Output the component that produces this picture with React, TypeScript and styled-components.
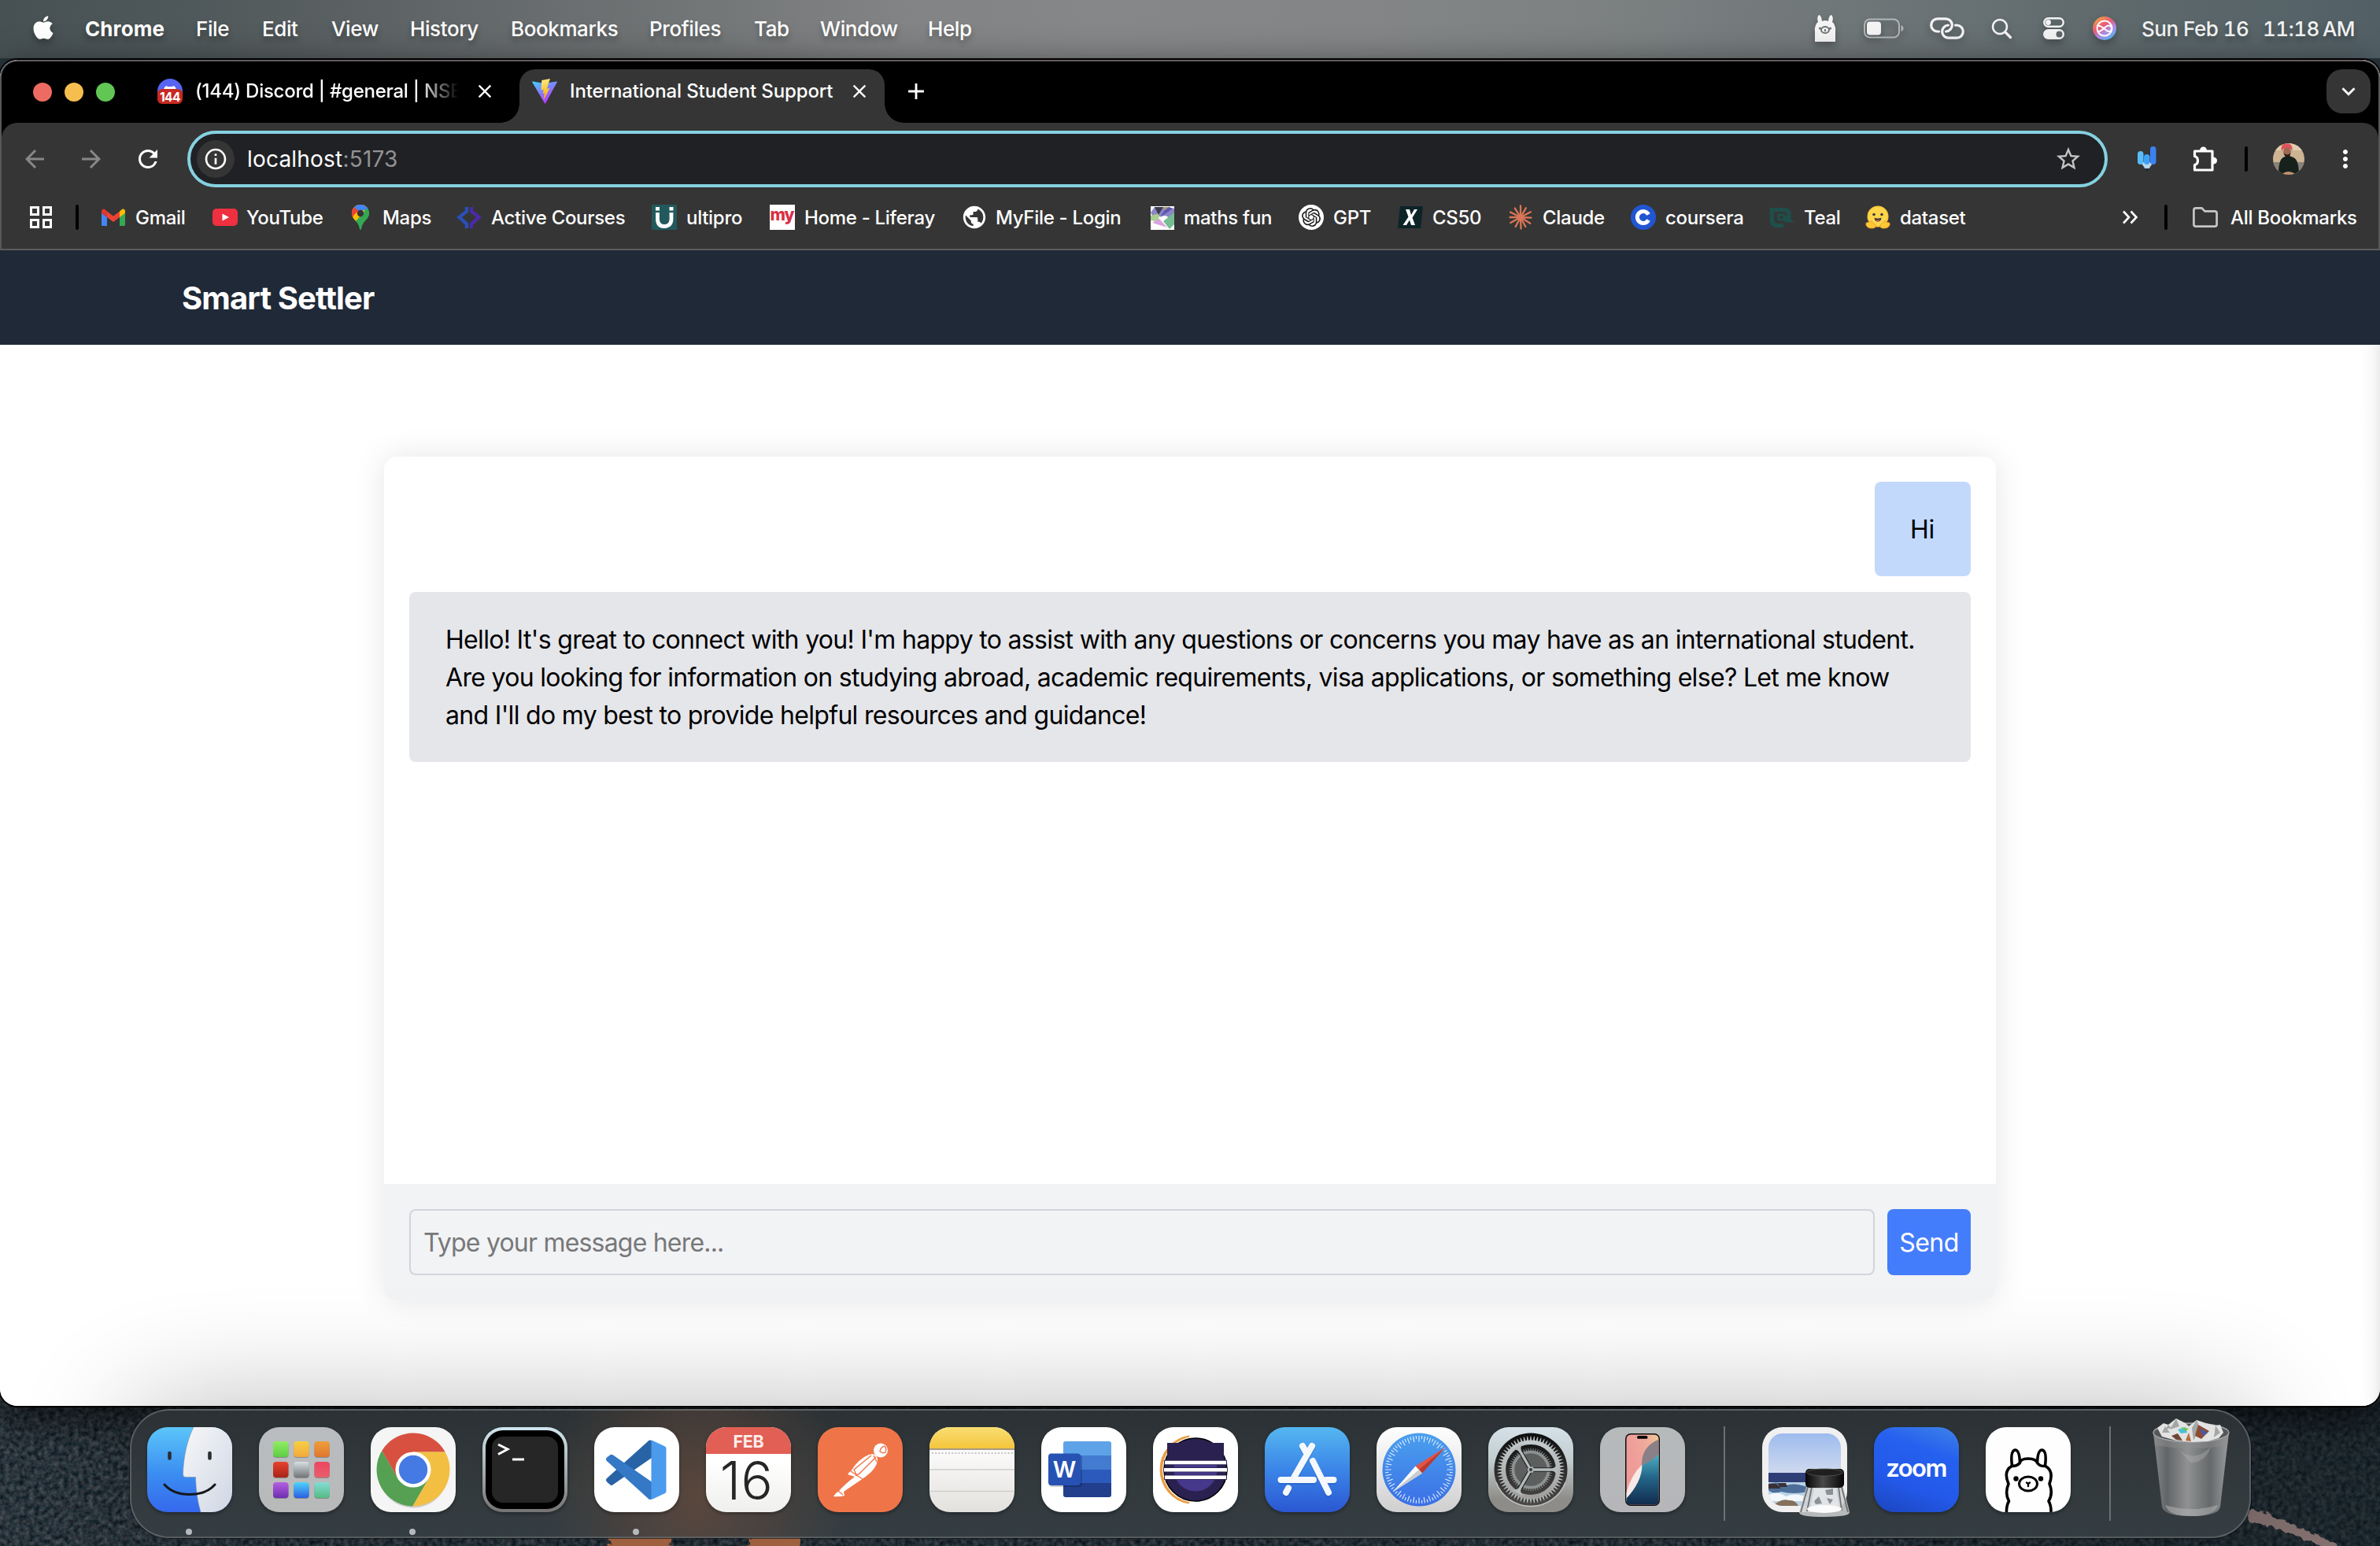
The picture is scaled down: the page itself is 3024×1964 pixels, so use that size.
import React from "react";
import styled, { createGlobalStyle } from "styled-components";
import { FaApple } from "react-icons/fa";
import { SiOpenai } from "react-icons/si";
import {
  MdArrowBack,
  MdArrowForward,
  MdRefresh,
  MdStarBorder,
  MdClose,
  MdAdd,
  MdKeyboardArrowDown,
  MdInfoOutline,
  MdMoreVert,
  MdPublic,
} from "react-icons/md";

const GlobalStyle = createGlobalStyle`
  * { box-sizing: border-box; }
  html, body { margin: 0; padding: 0; }
  body {
    width: 3024px;
    height: 1964px;
    overflow: hidden;
    background: #1d262b;
    font-family: Inter, "Liberation Sans", sans-serif;
    -webkit-font-smoothing: antialiased;
  }
  svg { display: block; flex: none; }
`;

/* ---------- desktop ---------- */

const Desktop = styled.div`
  position: relative;
  display: flex;
  flex-direction: column;
  width: 3024px;
  height: 1964px;
  overflow: hidden;
  background: #29353c;
`;

const Wallpaper = styled.svg`
  position: absolute;
  left: 0;
  bottom: 0;
`;

/* ---------- menu bar ---------- */

const MenuBar = styled.header`
  position: relative;
  display: flex;
  align-items: center;
  height: 74px;
  flex: none;
  padding: 0 34px 2px 38px;
  color: #fff;
  font-size: 26px;
  font-weight: 500;
  background: linear-gradient(90deg, #475153 0%, #4f585a 8%, #5f6466 17%, #747778 30%, #828384 38%, #868788 46%, #838586 58%, #7d8182 67%, #6d7577 79%, #5d686b 90%, #526066 100%);
  svg { filter: drop-shadow(0 5px 5px rgba(0, 0, 0, 0.28)); }
`;

const AppleSlot = styled.div`
  width: 70px;
  padding-bottom: 2px;
`;

const MenuItem = styled.span<{ $w: number; $bold?: boolean }>`
  width: ${(p) => p.$w}px;
  flex: none;
  white-space: nowrap;
  font-weight: ${(p) => (p.$bold ? 700 : 500)};
  letter-spacing: ${(p) => (p.$bold ? "0.1px" : "-0.4px")};
  text-shadow: 0 5px 7px rgba(0, 0, 0, 0.3);
`;

const StatusArea = styled.div`
  display: flex;
  align-items: center;
  margin-left: auto;
`;

const StatusSlot = styled.div<{ $w: number }>`
  width: ${(p) => p.$w}px;
  flex: none;
`;

const Clock = styled.div`
  display: grid;
  grid-template-columns: 154px 115px;
  color: #f2f3f3;
  white-space: nowrap;
  font-variant-numeric: tabular-nums;
  letter-spacing: -0.5px;
  text-shadow: 0 5px 7px rgba(0, 0, 0, 0.3);
`;

/* ---------- browser window ---------- */

const Window = styled.main`
  position: relative;
  display: flex;
  flex-direction: column;
  width: 3024px;
  height: 1710px;
  margin-top: 2px;
  flex: none;
  border-radius: 22px;
  overflow: hidden;
  background: #fff;
  box-shadow: 0 0 0 2px #000, 0 14px 50px rgba(0, 0, 0, 0.75);
`;

const BrowserChrome = styled.div`
  display: flex;
  flex-direction: column;
  height: 242px;
  flex: none;
  background: #000;
  border: 2px solid #57585a;
  border-top-color: #625d60;
  border-bottom-color: #5c5d5e;
  border-radius: 22px 22px 0 0;
`;

const TabStrip = styled.div`
  display: flex;
  height: 78px;
  flex: none;
  padding: 10px 10px 0 40px;
`;

const TrafficLights = styled.div`
  display: flex;
  gap: 16px;
  width: 136px;
  padding-top: 17px;
`;

const Light = styled.i<{ $c: string }>`
  width: 24px;
  height: 24px;
  border-radius: 50%;
  background: ${(p) => p.$c};
`;

const Tab = styled.div<{ $w: number; $active?: boolean }>`
  position: relative;
  display: flex;
  align-items: center;
  width: ${(p) => p.$w}px;
  height: 68px;
  flex: none;
  padding: 0 0 12px ${(p) => (p.$active ? 16 : 22)}px;
  color: #fff;
  background: ${(p) => (p.$active ? "#353535" : "transparent")};
  border-radius: 20px 20px 0 0;
  &::before, &::after {
    content: "";
    display: ${(p) => (p.$active ? "block" : "none")};
    position: absolute;
    bottom: 0;
    width: 24px;
    height: 24px;
  }
  &::before { left: -24px; background: radial-gradient(circle at 0 0, transparent 23.5px, #353535 24px); }
  &::after { right: -24px; background: radial-gradient(circle at 100% 0, transparent 23.5px, #353535 24px); }
`;

const TabTitle = styled.span<{ $w: number; $fade?: boolean }>`
  width: ${(p) => p.$w}px;
  flex: none;
  margin-left: 16px;
  white-space: nowrap;
  font-size: 24px;
  font-weight: 500;
  line-height: 32px;
  letter-spacing: ${(p) => (p.$fade ? "-0.25px" : "-0.12px")};
  ${(p) => p.$fade && "mask-image: linear-gradient(90deg, #000 84%, transparent 99%);"}
`;

const TabClose = styled.span<{ $ml: number }>`
  margin-left: ${(p) => p.$ml}px;
`;

const NewTab = styled.div`
  padding: 11px 0 0 23px;
  color: #fff;
`;

const TabSearch = styled.div`
  display: flex;
  align-items: center;
  justify-content: center;
  width: 56px;
  height: 56px;
  margin-left: auto;
  border-radius: 20px;
  background: #353535;
  color: #fff;
`;

const ToolArea = styled.div`
  flex: 1;
  background: #353535;
  border-radius: 20px 20px 0 0;
`;

const Toolbar = styled.div`
  display: flex;
  align-items: center;
  height: 92px;
  padding-left: 24px;
`;

const NavButton = styled.span<{ $dim?: boolean }>`
  width: 72px;
  color: ${(p) => (p.$dim ? "#878787" : "#fff")};
`;

const Omnibox = styled.div`
  display: flex;
  align-items: center;
  width: 2440px;
  height: 72px;
  margin-left: -4px;
  padding: 0 28px 0 8px;
  border: 4px solid #85d1e0;
  border-radius: 36px;
  background: #202124;
  color: #c4c4c4;
`;

const InfoBadge = styled.div`
  display: flex;
  align-items: center;
  justify-content: center;
  width: 48px;
  height: 48px;
  border-radius: 50%;
  background: #353535;
  color: #fff;
`;

const Url = styled.span`
  flex: 1;
  margin-left: 16px;
  font-size: 28px;
  line-height: 36px;
  letter-spacing: 0.2px;
  color: #fff;
  em { font-style: normal; color: #929294; }
`;

const ToolDivider = styled.i<{ $ml: number; $mr: number }>`
  width: 4px;
  height: 32px;
  flex: none;
  margin: 0 ${(p) => p.$mr}px 0 ${(p) => p.$ml}px;
  border-radius: 2px;
  background: #000;
`;

const Extensions = styled.div`
  display: flex;
  align-items: center;
  margin-left: 38px;
  color: #fff;
`;

const MoreSlot = styled.div`
  width: 34px;
  margin-left: 34px;
`;

const BookmarkBar = styled.div`
  display: flex;
  align-items: center;
  height: 56px;
  padding-left: 35px;
  color: #fff;
  font-size: 24px;
  font-weight: 500;
`;

const Bookmark = styled.span<{ $w: number; $gap?: number }>`
  display: flex;
  align-items: center;
  gap: ${(p) => p.$gap ?? 12}px;
  width: ${(p) => p.$w}px;
  flex: none;
  white-space: nowrap;
  letter-spacing: -0.3px;
`;

/* ---------- page ---------- */

const SiteNav = styled.nav`
  display: flex;
  align-items: center;
  height: 120px;
  flex: none;
  padding: 0 231px;
  background: #1f2937;
`;

const Brand = styled.h1`
  margin: 0;
  padding-top: 1px;
  font-size: 40px;
  line-height: 56px;
  font-weight: 700;
  letter-spacing: -0.9px;
  color: #fff;
`;

const Page = styled.section`
  display: flex;
  flex-direction: column;
  align-items: center;
  flex: 1;
  padding-top: 142px;
  background: linear-gradient(270deg, #ebebeb 0, #f7f7f7 8px, #fefefe 22px, #fff 30px);
`;

const ChatCard = styled.div`
  display: flex;
  flex-direction: column;
  width: 2048px;
  height: 1072px;
  border-radius: 16px;
  overflow: hidden;
  background: #fff;
  box-shadow: 0 0 40px rgba(0, 0, 0, 0.1);
`;

const Messages = styled.div`
  display: flex;
  flex-direction: column;
  gap: 20px;
  height: 924px;
  padding: 32px;
`;

const Bubble = styled.p<{ $mine?: boolean }>`
  align-self: ${(p) => (p.$mine ? "flex-end" : "stretch")};
  ${(p) => p.$mine && "width: 122px;"}
  margin: 0;
  padding: 37px ${(p) => (p.$mine ? 40 : 60)}px 35px ${(p) => (p.$mine ? 45 : 46)}px;
  border-radius: 8px;
  background: ${(p) => (p.$mine ? "#c3d9fc" : "#e5e6ea")};
  color: #000;
  font-size: 32px;
  line-height: 48px;
  letter-spacing: ${(p) => (p.$mine ? "-0.4px" : "-0.68px")};
`;

const Composer = styled.form`
  display: flex;
  gap: 16px;
  height: 148px;
  margin: 0;
  padding: 32px;
  background: #f2f3f5;
`;

const MessageInput = styled.input`
  flex: 1;
  height: 84px;
  padding: 1px 16px 0;
  border: 2px solid #d2d4dd;
  border-radius: 8px;
  background: transparent;
  font: 400 32px/48px Inter, "Liberation Sans", sans-serif;
  letter-spacing: -0.8px;
  &::placeholder { color: #77787a; opacity: 1; }
`;

const SendButton = styled.button`
  width: 106px;
  height: 84px;
  padding: 2px 0 0;
  border: 0;
  border-radius: 8px;
  background: #447dfb;
  color: #fff;
  font: 400 32px/48px Inter, "Liberation Sans", sans-serif;
  letter-spacing: -0.5px;
`;

/* ---------- dock ---------- */

const Dock = styled.footer`
  position: relative;
  display: flex;
  gap: 34px;
  align-self: center;
  width: 2695px;
  height: 164px;
  margin-top: 4px;
  flex: none;
  padding: 21px 0 0 20px;
  border: 2px solid rgba(120, 128, 131, 0.55);
  border-radius: 50px;
  background:
    radial-gradient(ellipse 190px 230px at 720px 110px, rgba(120, 80, 60, 0.55), transparent),
    linear-gradient(180deg, #2b3134 0%, #333a3d 60%, #343d42 100%);
  box-shadow: 0 0 0 1px rgba(0, 0, 0, 0.5), 0 0 150px -4px rgba(0, 0, 0, 0.32);
`;

const DockItem = styled.div`
  position: relative;
  width: 108px;
  height: 108px;
  flex: none;
`;

const Tile = styled.div<{ $bg: string }>`
  position: relative;
  width: 108px;
  height: 108px;
  border-radius: 26px;
  overflow: hidden;
  background: ${(p) => p.$bg};
  box-shadow: 0 2px 4px rgba(0, 0, 0, 0.35);
`;

const RunningDot = styled.i`
  position: absolute;
  left: 49px;
  top: 129px;
  width: 8px;
  height: 8px;
  border-radius: 50%;
  background: #b4b9bb;
`;

const DockDivider = styled.i<{ $mr: number }>`
  width: 2px;
  height: 120px;
  flex: none;
  margin: -1px ${(p) => p.$mr}px 0 15px;
  background: #6b7174;
`;

const font = "Inter, 'Liberation Sans', sans-serif";

/* ---------- menu bar drawings ---------- */

const LlamaStatus = () => (
  <svg width="28" height="34" viewBox="0 0 28 34">
    <path d="M1 34V22Q0 17 2 13Q3 10 5 9Q3 3 6 0Q9 0 10 8Q14 6 18 8Q19 0 22 0Q25 3 23 9Q25 10 26 13Q28 17 27 22V34Z" fill="#f4f4f4" />
    <ellipse cx="14" cy="19" rx="5" ry="4" fill="none" stroke="#6d7577" strokeWidth="2" />
    <circle cx="7.5" cy="17" r="1.6" fill="#6d7577" />
    <circle cx="20.500" cy="17" r="1.6" fill="#6d7577" />
    <rect x="13" y="18" width="2" height="3" fill="#6d7577" />
  </svg>
);

const Battery = () => (
  <svg width="52" height="26" viewBox="0 0 52 26">
    <rect x="1" y="1.500" width="44" height="23" rx="7" fill="none" stroke="#b1b5b6" strokeWidth="2" />
    <rect x="4" y="4.500" width="18" height="17" rx="4" fill="#f4f4f4" />
    <path d="M47.500 9Q50.500 10 50.500 13Q50.500 16 47.500 17Z" fill="#b1b5b6" />
  </svg>
);

const Links = () => (
  <svg width="44" height="28" viewBox="0 0 44 28" fill="none" stroke="#f4f4f4" strokeWidth="3.200" strokeLinecap="round">
    <path d="M11.500 18H9.800A8.100 8.100 0 0 1 9.800 1.800H20A8.100 8.100 0 0 1 20.500 18" />
    <path d="M32.500 10H34.200A8.100 8.100 0 0 1 34.200 26.200H24A8.100 8.100 0 0 1 23.500 10" />
  </svg>
);

const Magnifier = () => (
  <svg width="27" height="27" viewBox="0 0 27 27" fill="none" stroke="#f4f4f4" strokeWidth="2.600" strokeLinecap="round">
    <circle cx="11" cy="11" r="9" />
    <path d="M18 18L24.500 24.500" strokeWidth="3.200" />
  </svg>
);

const ControlCenter = () => (
  <svg width="27" height="28" viewBox="0 0 27 28">
    <rect x="1.300" y="1.300" width="24.400" height="10.400" rx="5.200" fill="none" stroke="#f4f4f4" strokeWidth="2.400" />
    <circle cx="6.500" cy="6.500" r="3.400" fill="#f4f4f4" />
    <rect x="0" y="15" width="27" height="13" rx="6.500" fill="#f4f4f4" />
    <circle cx="20.500" cy="21.500" r="4" fill="#5d686b" />
  </svg>
);

const Siri = () => (
  <svg width="30" height="30" viewBox="0 0 30 30">
    <defs>
      <linearGradient id="siri" x1="0.100" y1="0.100" x2="0.700" y2="1">
        <stop offset="0" stopColor="#f0a146" />
        <stop offset="0.400" stopColor="#ea5a78" />
        <stop offset="0.650" stopColor="#b58be8" />
        <stop offset="1" stopColor="#55b6f2" />
      </linearGradient>
    </defs>
    <circle cx="15" cy="15" r="15" fill="url(#siri)" />
    <circle cx="15" cy="15" r="9.500" fill="none" stroke="#fff" strokeWidth="2" />
    <path d="M6 12C11 10 17 19 20 19Q24 19 24 15Q24 11.500 20 11.500C16 11.500 12 19 7 19" fill="none" stroke="#fff" strokeWidth="2" />
  </svg>
);

/* ---------- browser drawings ---------- */

const DiscordFavicon = () => (
  <svg width="32" height="32" viewBox="0 0 32 32">
    <circle cx="16" cy="16" r="16" fill="#5865f2" />
    <path d="M8 14Q9 9.500 12 9L13 10.200Q16 9.800 19 10.200L20 9Q23 9.500 24 14Z" fill="#fff" />
    <rect x="0" y="13" width="32" height="19" rx="6" fill="#c62a22" />
    <text x="16" y="28.500" textAnchor="middle" fontFamily={font} fontSize="15.500" fontWeight="700" fill="#fff" letterSpacing="-0.5">144</text>
  </svg>
);

const ViteFavicon = () => (
  <svg width="32" height="32" viewBox="0 0 32 32">
    <defs>
      <linearGradient id="viteA" x1="0" y1="0" x2="0.600" y2="1">
        <stop offset="0" stopColor="#41d1ff" />
        <stop offset="1" stopColor="#bd34fe" />
      </linearGradient>
      <linearGradient id="viteB" x1="0.400" y1="0" x2="0.600" y2="1">
        <stop offset="0" stopColor="#ffea83" />
        <stop offset="1" stopColor="#ffa800" />
      </linearGradient>
    </defs>
    <path d="M31.800 4.500L17.200 31.200Q16.600 32 16 31.200L0.300 4.500Q0 3.200 1.200 3.400L16 6L30.700 3.400Q32.200 3.300 31.800 4.500Z" fill="url(#viteA)" />
    <path d="M23 0L12.300 2.100L11.500 14.500L14.800 13.800L13.700 18.700L16 18L14.600 25.300Q15.200 26 16.500 23.800L22.500 12L18.800 12.700Z" fill="url(#viteB)" />
  </svg>
);

const StylusExtension = () => (
  <svg width="24" height="32" viewBox="0 0 24 32">
    <path d="M4 20H20L14 29H10Z" fill="#b9d6ea" />
    <path d="M9 28H15L12 32Z" fill="#1b2c3c" />
    <rect x="0" y="6" width="7.500" height="17" rx="3.700" fill="#56bdf9" />
    <rect x="8" y="10" width="7.500" height="13" rx="3.700" fill="#3fa1f5" />
    <rect x="16" y="0" width="7.500" height="23" rx="3.700" fill="#3c82f0" />
  </svg>
);

const PuzzleIcon = () => (
  <svg width="34" height="34" viewBox="0 0 34 34">
    <path d="M27 7H4.500V13.500Q8.500 14.500 8.500 19Q8.500 23.500 4.500 24.500V31H27Z" fill="none" stroke="#fff" strokeWidth="3.200" strokeLinejoin="round" />
    <path d="M11 7Q11 1.500 15.500 1.500Q20 1.500 20 7ZM27 14.500Q33 14.500 33 19Q33 23.500 27 23.500Z" fill="#fff" />
  </svg>
);

const Avatar = () => (
  <svg width="40" height="40" viewBox="0 0 40 40">
    <clipPath id="avatar"><circle cx="20" cy="20" r="20" /></clipPath>
    <g clipPath="url(#avatar)">
      <rect width="40" height="40" fill="#cdb493" />
      <rect width="40" height="9" fill="#e2cdae" />
      <rect y="24" width="40" height="16" fill="#87817a" />
      <path d="M7 40Q7 21 13 18L17 16H21L26 18Q33 21 33 40Z" fill="#16211c" />
      <path d="M13 38Q19 34 27 38V40H13Z" fill="#c09070" />
      <ellipse cx="18" cy="10.500" rx="4.800" ry="6.500" fill="#9c6b50" />
      <path d="M13.500 12Q18 17 22.500 12L21.500 16L18 18L15 16Z" fill="#2a1b16" />
      <path d="M11 10Q9 0 17.500 0Q25.500 0 24.500 10Q22 5.500 18 5.500Q14 5.500 11 10Z" fill="#e0525c" />
    </g>
  </svg>
);

const AppsGrid = () => (
  <svg width="30" height="30" viewBox="0 0 30 30" fill="none" stroke="#fff" strokeWidth="3">
    {[2.5, 18.5].map((y) => [2.5, 18.5].map((x) => <rect key={`${x}-${y}`} x={x} y={y} width="9" height="9" />))}
  </svg>
);

const GmailIcon = () => (
  <svg width="32" height="32" viewBox="0 0 32 32">
    <path d="M1 10V25.500Q1 27 2.500 27H8V14Z" fill="#4285f4" />
    <path d="M31 10V25.500Q31 27 29.500 27H24V14Z" fill="#34a853" />
    <path d="M24 8.500V16L31 10.700V8.500Q31 5 27.500 5.500Z" fill="#fbbc04" />
    <path d="M1 8.500V10.700L8 16V8.500L4.500 5.500Q1 5.200 1 8.500Z" fill="#c5221f" />
    <path d="M8 16V8.500L16 14.500L24 8.500V16L16 22Z" fill="#ea4335" />
    <path d="M3 5.500Q5 5 8 8.500V16L1 10.500V8Z" fill="#d93a30" />
  </svg>
);

const YouTubeIcon = () => (
  <svg width="32" height="32" viewBox="0 0 32 32">
    <rect x="0" y="5" width="32" height="22" rx="5" fill="#ee3040" />
    <path d="M12.500 11.500L21 16L12.500 20.500Z" fill="#fff" />
  </svg>
);

const MapsIcon = () => (
  <svg width="32" height="32" viewBox="0 0 32 32">
    <clipPath id="pin"><path d="M16 0C22.500 0 27 4.800 27 11C27 18 19 21 17.500 29Q17.200 32 16 32Q14.800 32 14.500 29C13 21 5 18 5 11C5 4.800 9.500 0 16 0Z" /></clipPath>
    <g clipPath="url(#pin)">
      <rect width="32" height="32" fill="#34a853" />
      <path d="M0 0H32L16 12L8 20L0 14Z" fill="#fbbc04" />
      <path d="M0 20L22 0H0Z" fill="#ea4335" />
      <path d="M0 32L16 13L27 0L30 16L14 22Z" fill="#34a853" />
      <path d="M3 18L20 2L21 9L8 23Z" fill="#fbbc04" />
      <path d="M0 2L10 10L5 17L0 16Z" fill="#ea4335" />
      <path d="M8 3L15 9L28 4V0H10Z" fill="#4285f4" />
    </g>
    <circle cx="16" cy="11" r="4.200" fill="#353535" />
  </svg>
);

const CoursesIcon = () => (
  <svg width="32" height="32" viewBox="0 0 32 32" strokeLinejoin="miter" fill="none" strokeWidth="4.400">
    <path d="M13 3V8.500L3.500 16L13 24.500V30" stroke="#2a4fb8" />
    <path d="M19 3V8.500L28.500 16L19 24.500V30" stroke="#4b2aa8" />
  </svg>
);

const UltiproIcon = () => (
  <svg width="32" height="32" viewBox="0 0 32 32">
    <rect width="32" height="32" fill="#22595c" />
    <path d="M7.500 10V18Q7.500 27.500 16 27.500Q25 27.500 25 18V10" fill="none" stroke="#fff" strokeWidth="4.800" />
    <rect x="5" y="3" width="5" height="4.500" fill="#fff" />
    <rect x="22.500" y="3" width="5" height="4.500" fill="#fff" />
  </svg>
);

const MyIcon = () => (
  <svg width="32" height="32" viewBox="0 0 32 32">
    <rect width="32" height="32" fill="#fff" />
    <text x="15.500" y="20" textAnchor="middle" fontFamily={font} fontWeight="800" fontSize="21" letterSpacing="-1" fill="#d92f45">my</text>
  </svg>
);

const MathsIcon = () => (
  <svg width="32" height="32" viewBox="0 0 32 32">
    <rect x="1" y="2" width="30" height="30" fill="#fff" />
    <path d="M1 10L6 3H22L31 5V20L20 14L4 16Z" fill="#8b86c4" />
    <path d="M1 14L12 11L11 22L1 20Z" fill="#a8cf8e" />
    <path d="M6 3H17L11 13Z" fill="#3d3b50" />
    <path d="M17 3H26L20 10Z" fill="#a99a6a" />
    <path d="M17 21L31 10V25L25 31Z" fill="#76bd93" />
    <path d="M3 23L12 18L22 29Z" fill="#d9a3dc" />
    <path d="M13 16L29 5L24 3L18 8Z" fill="#5f56b4" />
  </svg>
);

const OpenAiBadge = styled.span`
  display: flex;
  align-items: center;
  justify-content: center;
  width: 32px;
  height: 32px;
  border-radius: 50%;
  background: #fff;
  color: #1b1b1b;
`;

const Cs50Icon = () => (
  <svg width="32" height="32" viewBox="0 0 32 32">
    <path d="M3 2H32L29 30H0Z" fill="#0c2428" />
    <path d="M10 6H15L17 13L21 6H25L18.500 16.500L22 26H17L15 19.500L11 26H6.500L13.500 15.500Z" fill="#fff" />
  </svg>
);

const ClaudeIcon = () => (
  <svg width="32" height="32" viewBox="0 0 32 32" stroke="#d97757" strokeWidth="2.300" strokeLinecap="round">
    {[3, 32, 62, 88, 118, 151, 180, 207, 238, 270, 300, 332].map((a, i) => (
      <line key={a} x1="16" y1="16" x2={16 + (i % 2 ? 14.5 : 13.5)} y2="16" transform={`rotate(${a} 16 16)`} />
    ))}
  </svg>
);

const CourseraIcon = () => (
  <svg width="32" height="32" viewBox="0 0 32 32">
    <circle cx="16" cy="16" r="16" fill="#2156d2" />
    <path d="M22.500 12.500A7.500 7.500 0 1 0 22.500 19.500" fill="none" stroke="#fff" strokeWidth="5" />
  </svg>
);

const TealIcon = () => (
  <svg width="32" height="32" viewBox="0 0 32 32" fill="none" stroke="#1e4f4b">
    <path d="M5 6.500H19Q25 6.500 25 12V19" strokeWidth="5" />
    <path d="M3.500 4V20Q3.500 26.500 11 26.500H18" strokeWidth="5.500" />
    <path d="M12 13H19V19H12Z" strokeWidth="3" />
    <path d="M20 14L31 22H20Z" fill="#1e4f4b" strokeWidth="1" />
  </svg>
);

const HuggingIcon = () => (
  <svg width="32" height="32" viewBox="0 0 32 32">
    <circle cx="16" cy="15" r="13.500" fill="#f9c83a" />
    <circle cx="16" cy="15" r="12" fill="#ffd54a" />
    <circle cx="11" cy="12.500" r="1.800" fill="#3a3b45" />
    <circle cx="21" cy="12.500" r="1.800" fill="#3a3b45" />
    <path d="M11.500 16.500Q16 18.500 20.500 16.500Q20 21.500 16 21.500Q12 21.500 11.500 16.500Z" fill="#3a3b45" />
    <path d="M13.500 20Q16 18.500 18.500 20Q16 22.500 13.500 20Z" fill="#ef4e4e" />
    <path d="M1 26Q0 22 4 22.500L7 20.500L13 26Q14 30 9 30Q3 30.500 1 26Z" fill="#ffc835" stroke="#e8932e" strokeWidth="0.800" />
    <path d="M31 26Q32 22 28 22.500L25 20.500L19 26Q18 30 23 30Q29 30.500 31 26Z" fill="#ffc835" stroke="#e8932e" strokeWidth="0.800" />
  </svg>
);

const ChevronsIcon = () => (
  <svg width="22" height="18" viewBox="0 0 22 18" fill="none" stroke="#fff" strokeWidth="2.600">
    <path d="M2 1.500L9 9L2 16.500M11.500 1.500L18.500 9L11.500 16.500" />
  </svg>
);

const FolderIcon = () => (
  <svg width="32" height="26" viewBox="0 0 32 26" fill="none" stroke="#c6c6c6" strokeWidth="2.700">
    <path d="M4 1.400H11.500L15.500 5.400H28Q30.600 5.400 30.600 8V22Q30.600 24.600 28 24.600H4Q1.400 24.600 1.400 22V4Q1.400 1.400 4 1.400Z" />
  </svg>
);

/* ---------- dock drawings ---------- */

const Art = ({ children }: { children: React.ReactNode }) => (
  <svg width="108" height="108" viewBox="0 0 108 108">{children}</svg>
);

const Finder = () => (
  <Art>
    <defs>
      <linearGradient id="fin" x1="0" y1="0" x2="1" y2="1"><stop offset="0" stopColor="#f7f7f8" /><stop offset="1" stopColor="#cfd7e4" /></linearGradient>
    </defs>
    <path d="M59 0C50 18 46 40 45.500 60Q45.500 63.500 49 63.500H61.500Q62 88 68 108H108V0Z" fill="url(#fin)" />
    <path d="M59 0C50 18 46 40 45.500 60Q45.500 63.500 49 63.500H61.500Q62 88 68 108" fill="none" stroke="#7a8898" strokeOpacity="0.500" strokeWidth="1" />
    <path d="M28.500 33V39.500M79.500 33V39.500" stroke="#2b2d30" strokeWidth="4.600" strokeLinecap="round" />
    <path d="M22 73Q33 85.500 54 85.500Q75 85.500 86 73" fill="none" stroke="#15181c" strokeWidth="3" strokeLinecap="round" />
  </Art>
);

const launchColors: [string, string][] = [
  ["#93ec63", "#5cce45"], ["#f8cf44", "#f2a93b"], ["#ee9e3a", "#e07530"],
  ["#e8432f", "#a82318"], ["#d7dfe4", "#727678"], ["#ec4560", "#e8606c"],
  ["#b45fe0", "#6d2eb0"], ["#4fd3fb", "#2a5fe0"], ["#85dcd5", "#55bb84"],
];

const Launchpad = () => (
  <Art>
    {launchColors.map(([a, b], i) => (
      <g key={i}>
        <linearGradient id={`lp${i}`} x1="0" y1="0" x2="0" y2="1"><stop offset="0" stopColor={a} /><stop offset="1" stopColor={b} /></linearGradient>
        <rect x={18 + (i % 3) * 26.2} y={19 + Math.floor(i / 3) * 26} width="19.500" height="20" rx="4" fill="rgba(0,0,0,.25)" />
        <rect x={18 + (i % 3) * 26.2} y={18 + Math.floor(i / 3) * 26} width="19.500" height="20" rx="4" fill={`url(#lp${i})`} />
      </g>
    ))}
  </Art>
);

const ChromeLogo = () => (
  <Art>
    <ellipse cx="54" cy="56" rx="45" ry="46.500" fill="#000" opacity="0.160" />
    <g transform="translate(54 54)">
      <path d="M40.700 -22.500A46.500 46.500 0 0 0 -39.800 -24L-19.500 11.250L0 0L0 -22.500Z" fill="#d85140" />
      <path d="M40.700 -22.500A46.500 46.500 0 0 1 -0.860 46.500L19.500 11.250L0 -22.500Z" fill="#f3bf42" />
      <path d="M-39.800 -24A46.500 46.500 0 0 0 -0.860 46.500L19.500 11.250L-19.500 11.250Z" fill="#55a053" />
      <circle r="22.600" fill="#fff" />
      <circle r="18.200" fill="#4579e4" />
    </g>
  </Art>
);

const TerminalLogo = () => (
  <Art>
    <rect x="4" y="4" width="100" height="100" rx="22" fill="#000" />
    <rect x="12" y="12" width="84" height="84" rx="14" fill="#262626" />
    <path d="M20 22L32 28L20 34.500" fill="none" stroke="#fff" strokeWidth="3" />
    <path d="M38 41H53" stroke="#fff" strokeWidth="3" />
  </Art>
);

const VsCodeLogo = () => (
  <Art>
    <path d="M70 16.500L73 17V39L24 73Q22 75 20 73L16 69.500Q14 67 16 65Z" fill="#2863a5" />
    <path d="M16 43Q14 41 16 38.500L20 35.500Q22 34 24 35.500L73 69.500V91.500L70 92Z" fill="#3478c6" />
    <path d="M72.500 16.500Q73 16.500 74 17L90 24.500Q91.500 25.500 91.500 27V81.500Q91.500 83 90 84L74 91.500Q72.500 92 72.500 91Z" fill="#4a9aee" />
  </Art>
);

const CalendarLogo = () => (
  <Art>
    <rect width="108" height="34" fill="#e15f54" />
    <text x="54" y="26" textAnchor="middle" fontFamily={font} fontSize="21.500" fontWeight="700" fill="#fbecea" letterSpacing="-0.3">FEB</text>
    <text x="51.500" y="91.500" textAnchor="middle" fontFamily={font} fontSize="67" fontWeight="300" fill="#262626" letterSpacing="0.500">16</text>
  </Art>
);

const PostmanLogo = () => (
  <Art>
    <g fill="#fff">
      <path d="M70 34Q76 35 76 42Q75 52 62 62L55 67Q46 73 33 82L34 87Q27 89 20 88Q22 84 27 81Q35 72 47 63L38 60Q40 57 42 56Q52 40 65 35Z" />
      <ellipse cx="80" cy="29.500" rx="9" ry="9" />
    </g>
    <g fill="none" stroke="#ef7548" strokeWidth="1.400">
      <path d="M68 36L46 54L50 62M74 38L52 60M42 56L57 66M48 62L54 58M26 81L32 86M71 36L75 44" />
      <path d="M85 24Q80 25 79 31Q83 34 86 32Q88 28 85 24" />
    </g>
  </Art>
);

const NotesLogo = () => (
  <Art>
    <defs><linearGradient id="nt" x1="0" y1="0" x2="0" y2="1"><stop offset="0" stopColor="#f9de72" /><stop offset="1" stopColor="#f5c53c" /></linearGradient></defs>
    <rect width="108" height="27" fill="url(#nt)" />
    <rect y="27" width="108" height="2" fill="#a59b80" />
    <path d="M3 33H108" stroke="#c5c4c2" strokeWidth="2.200" strokeDasharray="2 2.200" />
    <path d="M0 54H108M0 81.500H108" stroke="#d0cfd0" strokeWidth="1.600" />
  </Art>
);

const WordLogo = () => (
  <Art>
    <clipPath id="wp"><rect x="28" y="18" width="61" height="71" rx="3" /></clipPath>
    <g clipPath="url(#wp)">
      <rect x="28" y="18" width="61" height="18" fill="#5ea3e8" />
      <rect x="28" y="36" width="61" height="18" fill="#427bd0" />
      <rect x="28" y="54" width="61" height="18" fill="#2c5abc" />
      <rect x="28" y="71" width="61" height="18" fill="#213f8c" />
    </g>
    <rect x="10" y="35" width="42" height="41" rx="4" fill="#000" opacity="0.200" />
    <rect x="9" y="33.500" width="41" height="40.500" rx="4" fill="#2752b4" />
    <text x="29.500" y="64" textAnchor="middle" fontFamily={font} fontSize="29" fontWeight="600" fill="#fff">W</text>
  </Art>
);

const EclipseLogo = () => (
  <Art>
    <path d="M46 11.500A43 43 0 0 0 46 96.500A46 46 0 0 1 46 11.500Z" fill="#eb9d42" stroke="#eb9d42" strokeWidth="2" />
    <circle cx="54" cy="54" r="42" fill="#fff" />
    <circle cx="54" cy="54" r="40" fill="#2a2150" stroke="#000" strokeWidth="1.600" />
    <circle cx="54" cy="54" r="27.500" fill="#46388a" />
    <rect x="18" y="20" width="72" height="22" fill="#2a2150" />
    <path d="M14 45H94M13.500 54.300H94.500M14 63.700H94" stroke="#2a2150" strokeWidth="6" />
    <path d="M15 45H93M14 54.300H94M15 63.700H93" stroke="#fff" strokeWidth="4.600" />
  </Art>
);

const AppStoreLogo = () => (
  <Art>
    <g fill="none" strokeLinecap="round" strokeWidth="8">
      <g stroke="#1c4fae" opacity="0.350" transform="translate(0 2)">
        <path d="M60 24L37 64M48 24L53 33M61 43L81 83M20.500 67H62M78 67H87.500M30 77.500L27 83" />
      </g>
      <g stroke="#f5f9fd">
        <path d="M48 24L53 33M60 24L37 64M20.500 67H62M78 67H87.500M30 77.500L27 83" />
        <path d="M61 43L81 83" />
      </g>
    </g>
  </Art>
);

const SafariLogo = () => (
  <Art>
    <defs><linearGradient id="sf" x1="0" y1="0" x2="0" y2="1"><stop offset="0" stopColor="#4aa0ee" /><stop offset="1" stopColor="#3b6fe6" /></linearGradient></defs>
    <circle cx="54" cy="54" r="46.500" fill="url(#sf)" />
    {Array.from({ length: 72 }, (_, i) => (
      <line key={i} x1="54" y1="11" x2="54" y2={i % 2 ? 15 : 18.5} stroke="#dcebfb" strokeWidth="1.200" transform={`rotate(${i * 5} 54 54)`} />
    ))}
    <path d="M87 26L49.500 49.500L58 58.500Z" fill="#e25444" />
    <path d="M87 26L54 54L58 58.500Z" fill="#b93a30" />
    <path d="M21 82L49.500 49.500L58 58.500Z" fill="#fbfbfb" />
    <path d="M21 82L54 54L58 58.500Z" fill="#c9cccd" />
  </Art>
);

const SettingsLogo = () => (
  <Art>
    <defs>
      <linearGradient id="well" x1="0" y1="0" x2="0" y2="1"><stop offset="0" stopColor="#0c0d0e" /><stop offset="1" stopColor="#4d4b49" /></linearGradient>
      <linearGradient id="ring" x1="0" y1="0" x2="0" y2="1"><stop offset="0" stopColor="#c3cbce" /><stop offset="1" stopColor="#a09f9d" /></linearGradient>
    </defs>
    <circle cx="54" cy="54" r="46.500" fill="url(#well)" />
    <path d="M10 70A47 47 0 0 0 98 70" fill="none" stroke="#c5c6c4" strokeWidth="1.400" />
    {Array.from({ length: 60 }, (_, i) => (
      <path key={i} d="M52.700 17L53.600 11.500H54.400L55.300 17Z" fill="#b5babb" transform={`rotate(${i * 6} 54 54)`} />
    ))}
    {Array.from({ length: 54 }, (_, i) => (
      <path key={i} d="M53.200 31L53.700 26.500H54.300L54.800 31Z" fill="#8f9494" transform={`rotate(${i * (360 / 54)} 54 54)`} />
    ))}
    <circle cx="54" cy="54" r="22.500" fill="#5d5f5e" stroke="#8c9191" strokeWidth="3.600" />
    <g stroke="#1d2021" strokeWidth="5.500">
      <path d="M54 54H88" /><path d="M54 54H88" transform="rotate(120 54 54)" /><path d="M54 54H88" transform="rotate(240 54 54)" />
    </g>
    <circle cx="54" cy="54" r="34.700" fill="none" stroke="url(#ring)" strokeWidth="5.600" />
    {[0, 120, 240].map((a) => (
      <path key={a} d="M54 52.300L81 52.300Q86 52 88 45V63Q86 56 81 55.700L54 55.700Z" fill="#b5babb" transform={`rotate(${a} 54 54)`} />
    ))}
    <circle cx="54" cy="54" r="4" fill="#aab0b1" />
    <circle cx="54" cy="54" r="1.900" fill="#2c2e2f" />
  </Art>
);

const PhoneLogo = () => (
  <Art>
    <defs>
      <linearGradient id="phA" x1="1" y1="0" x2="0.300" y2="0.500"><stop offset="0" stopColor="#f0cb90" /><stop offset="0.450" stopColor="#f0aa9c" /><stop offset="1" stopColor="#ef9c98" /></linearGradient>
      <linearGradient id="phB" x1="0" y1="0" x2="0" y2="1"><stop offset="0" stopColor="#4fb3c8" /><stop offset="0.450" stopColor="#24678a" /><stop offset="1" stopColor="#10294a" /></linearGradient>
      <clipPath id="ph"><rect x="33.500" y="9.500" width="41" height="89" rx="5.500" /></clipPath>
    </defs>
    <rect x="32" y="8" width="44" height="92" rx="7" fill="#0b0b0c" />
    <g clipPath="url(#ph)">
      <rect x="33" y="9" width="43" height="90" fill="url(#phA)" />
      <path d="M76 15Q52 24 53 49L76 38Z" fill="#8a8088" />
      <path d="M53 48Q40 60 33 84V95Q54 72 54 50Z" fill="#f6e9e6" />
      <path d="M76 33Q68 42 53.500 48.500Q53 70 33 91V100H76Z" fill="url(#phB)" />
    </g>
    <rect x="47" y="11" width="13.500" height="3.800" rx="1.900" fill="#000" />
  </Art>
);

const PreviewLogo = () => (
  <svg width="114" height="116" viewBox="0 0 114 116">
    <defs>
      <clipPath id="pv"><rect x="8" y="8" width="92" height="92" rx="18" /></clipPath>
      <linearGradient id="sky" x1="0" y1="0" x2="0" y2="1"><stop offset="0" stopColor="#9dbcee" /><stop offset="1" stopColor="#cfd9ee" /></linearGradient>
      <linearGradient id="cap" x1="0" y1="0" x2="1" y2="0"><stop offset="0" stopColor="#050505" /><stop offset="0.450" stopColor="#4a4a4a" /><stop offset="1" stopColor="#050505" /></linearGradient>
    </defs>
    <rect width="108" height="108" rx="26" fill="#f1f0f0" />
    <g clipPath="url(#pv)">
      <rect x="8" y="8" width="92" height="50" fill="url(#sky)" />
      <rect x="8" y="58" width="92" height="14" fill="#2e3f78" />
      <rect x="8" y="70" width="92" height="32" fill="#b9d3e6" />
      <path d="M8 72Q20 68 30 74Q40 70 58 76V82Q40 86 24 82Q14 86 8 80Z" fill="#4c6f9a" />
      <path d="M8 72H18L24 78H8ZM20 71H30L32 76H22Z" fill="#3a3036" />
      <path d="M8 86Q20 80 30 88Q42 82 60 90V94H8Z" fill="#f2f8fb" />
      <path d="M14 100Q24 90 34 93Q42 92 46 100Z" fill="#85705a" />
    </g>
    <path d="M56 76H103L111 108Q112 114 79 114Q46 114 47 108Z" fill="#cfd0d1" opacity="0.850" />
    <path d="M58 76L49 108M101 76L109 108M63 76L57 107M97 76L101 106" stroke="#6f7274" strokeWidth="1.800" fill="none" />
    <path d="M66 78H94L98 104H61Z" fill="#e9ecee" opacity="0.700" />
    <path d="M66 94L72 88L76 97L68 98ZM80 80L90 78L90 86L82 86ZM82 90L90 92L86 98Z" fill="#8a9097" />
    <ellipse cx="79" cy="104" rx="22" ry="5" fill="#fbfbfb" />
    <rect x="55" y="53" width="49" height="24" rx="5" fill="url(#cap)" />
    <ellipse cx="79.500" cy="57.500" rx="23" ry="4.500" fill="#1f1f1f" stroke="#585858" strokeWidth="0.800" />
  </svg>
);

const ZoomLogo = () => (
  <Art>
    <text x="53.500" y="62.500" textAnchor="middle" fontFamily={font} fontSize="31" fontWeight="600" fill="#fff" letterSpacing="-1.500">zoom</text>
  </Art>
);

const OllamaLogo = () => (
  <Art>
    <g fill="none" stroke="#000" strokeWidth="3.600" strokeLinejoin="round">
      <path d="M26.500 110Q26 100 29.500 94Q24 84 29 72Q22 56 33 49.500Q39 50 43 46Q44 40 54 40Q64 40 66 46Q69 50 76 49.500Q87 56 81 72Q86 84 80 94Q83.500 100 83 110" />
      <path d="M33.500 49Q31 30 37.500 29Q43 29 43.500 46" />
      <path d="M75.500 49Q78 30 71.500 29Q66 29 65.500 46" />
      <ellipse cx="54" cy="72" rx="11.500" ry="9" strokeWidth="3" />
    </g>
    <ellipse cx="38.500" cy="65.500" rx="3.200" ry="3.200" />
    <ellipse cx="70" cy="65.500" rx="3.200" ry="3.200" />
    <path d="M52 70.500L54 72L56 70.500M54 72V75" fill="none" stroke="#000" strokeWidth="2.400" strokeLinecap="round" />
  </Art>
);

const TrashArt = styled.svg`
  margin-top: -13px;
`;

const Trash = () => (
  <TrashArt width="108" height="130" viewBox="0 0 108 130">
    <defs>
      <linearGradient id="can" x1="0" y1="0" x2="1" y2="0">
        <stop offset="0" stopColor="#85888a" /><stop offset="0.180" stopColor="#626567" /><stop offset="0.450" stopColor="#8f9192" /><stop offset="0.750" stopColor="#66696b" /><stop offset="1" stopColor="#9a9c9d" />
      </linearGradient>
    </defs>
    <path d="M5 20L16 114Q18 126 54 126Q88 126 90 114L101 20Z" fill="url(#can)" />
    <ellipse cx="53" cy="20" rx="48" ry="12" fill="#55585a" stroke="#a4a7a8" strokeWidth="1.500" />
    <path d="M10 14L18 8L24 10L34 2L46 8L50 12L60 4L72 8L84 11L90 10L94 20L88 27L74 31L54 32L34 30L16 25Z" fill="#e2e3e2" />
    <path d="M34 2L38 12L26 16ZM60 4L64 14L56 30L54 14ZM84 11L90 20L82 26ZM20 12L26 20L16 20ZM24 10L28 14L20 16Z" fill="#a5a7a7" />
    <path d="M36 16L46 13L48 20L40 21Z" fill="#48c1d8" />
    <path d="M40 13L50 15L46 18Z" fill="#76c04a" />
    <path d="M62 10L76 18L66 28L58 24Z" fill="#8d4a34" />
    <path d="M64 14L74 20L68 24Z" fill="#3f5ea8" />
    <path d="M28 24L36 21L42 30L34 29Z" fill="#6e4636" />
    <path d="M46 30L50 20L53 31Z" fill="#b86b3c" />
    <path d="M5 20Q7 32 53 32Q99 32 101 20L99 36Q53 44 7 36Z" fill="#8d8f90" opacity="0.450" />
    <path d="M36 40Q56 60 78 38Q72 58 52 58Z" fill="#b6b8b8" opacity="0.350" />
    <path d="M20 112Q54 122 87 112Q84 126 54 126Q24 126 20 112Z" fill="#b5b7b8" opacity="0.500" />
  </TrashArt>
);

type DockApp = { name: string; bg: string; art: React.ReactNode; running?: boolean };

const dockApps: DockApp[] = [
  { name: "Finder", bg: "linear-gradient(180deg,#5cc6fa 0%,#3b8df1 55%,#3568ec 100%)", art: <Finder />, running: true },
  { name: "Launchpad", bg: "linear-gradient(180deg,#b9bdc0,#b8b9b9)", art: <Launchpad /> },
  { name: "Chrome", bg: "#f4f5f4", art: <ChromeLogo />, running: true },
  { name: "Terminal", bg: "linear-gradient(180deg,#d0e6ee 0%,#a5adb0 50%,#757373 100%)", art: <TerminalLogo /> },
  { name: "Code", bg: "#fff", art: <VsCodeLogo />, running: true },
  { name: "Calendar", bg: "linear-gradient(180deg,#fff 40%,#efefed)", art: <CalendarLogo /> },
  { name: "Postman", bg: "#ef7548", art: <PostmanLogo /> },
  { name: "Notes", bg: "linear-gradient(180deg,#fbfafa 30%,#e2e1dd)", art: <NotesLogo /> },
  { name: "Word", bg: "#fff", art: <WordLogo /> },
  { name: "Eclipse", bg: "#fff", art: <EclipseLogo /> },
  { name: "App Store", bg: "linear-gradient(180deg,#55b7f0 0%,#3b85e8 50%,#2a57d2 100%)", art: <AppStoreLogo /> },
  { name: "Safari", bg: "linear-gradient(180deg,#fff,#cfcfd0)", art: <SafariLogo /> },
  { name: "Settings", bg: "linear-gradient(180deg,#d5e1e8,#c0cccd 40%,#8e8c88 85%)", art: <SettingsLogo /> },
  { name: "iPhone", bg: "linear-gradient(180deg,#b6babb,#b6b6b9)", art: <PhoneLogo /> },
];

const menus: [string, number][] = [
  ["File", 84], ["Edit", 88], ["View", 100], ["History", 128], ["Bookmarks", 176],
  ["Profiles", 133], ["Tab", 84], ["Window", 137], ["Help", 60],
];

const bookmarks: [string, number, React.ReactNode, number?][] = [
  ["Gmail", 142, <GmailIcon />],
  ["YouTube", 172, <YouTubeIcon />, 11],
  ["Maps", 138, <MapsIcon />],
  ["Active Courses", 248, <CoursesIcon />],
  ["ultipro", 150, <UltiproIcon />],
  ["Home - Liferay", 243, <MyIcon />],
  ["MyFile - Login", 240, <MdPublic size={34} />, 10],
  ["maths fun", 189, <MathsIcon />, 11],
  ["GPT", 126, <OpenAiBadge><SiOpenai size={24} /></OpenAiBadge>],
  ["CS50", 140, <Cs50Icon />],
  ["Claude", 156, <ClaudeIcon />],
  ["coursera", 176, <CourseraIcon />],
  ["Teal", 122, <TealIcon />],
  ["dataset", 326, <HuggingIcon />],
];

const DesktopPicture = () => (
  <Wallpaper width="3024" height="1964" viewBox="0 0 3024 1964">
    <defs>
      <filter id="grain" x="0" y="0" width="100%" height="100%" colorInterpolationFilters="sRGB">
        <feTurbulence type="fractalNoise" baseFrequency="0.160" numOctaves="3" seed="4" />
        <feColorMatrix values="0.36 0.06 0 0 -0.045  0.34 0 0.04 0 0.015  0.32 0 0.06 0 0.045  0 0 0 0 1" />
      </filter>
      <filter id="rough" x="-10%" y="-30%" width="120%" height="160%">
        <feTurbulence type="fractalNoise" baseFrequency="0.120" numOctaves="2" seed="9" />
        <feDisplacementMap in="SourceGraphic" scale="14" />
      </filter>
      <linearGradient id="shade" x1="0" y1="0" x2="1" y2="0">
        <stop offset="0.700" stopColor="#0d181c" stopOpacity="0" />
        <stop offset="1" stopColor="#0d181c" stopOpacity="0.500" />
      </linearGradient>
    </defs>
    <rect y="1740" width="3024" height="224" filter="url(#grain)" />
    <rect y="1740" width="3024" height="224" fill="url(#shade)" />
    <g filter="url(#rough)">
      <path d="M778 1940H858L852 1970H774Z" fill="#b96f49" />
      <path d="M958 1940H1014L1020 1970H946Z" fill="#b96f49" />
      <path d="M2852 1918L2880 1922L2930 1944L2986 1970H2964L2900 1944L2858 1934Z" fill="#84716f" />
    </g>
  </Wallpaper>
);

export default function App() {
  return (
    <>
      <GlobalStyle />
      <Desktop>
        <DesktopPicture />
        <MenuBar>
          <AppleSlot><FaApple size={34} /></AppleSlot>
          <MenuItem $w={141} $bold>Chrome</MenuItem>
          {menus.map(([label, w]) => <MenuItem key={label} $w={w}>{label}</MenuItem>)}
          <StatusArea>
            <StatusSlot $w={63}><LlamaStatus /></StatusSlot>
            <StatusSlot $w={84}><Battery /></StatusSlot>
            <StatusSlot $w={78}><Links /></StatusSlot>
            <StatusSlot $w={66}><Magnifier /></StatusSlot>
            <StatusSlot $w={63}><ControlCenter /></StatusSlot>
            <StatusSlot $w={62}><Siri /></StatusSlot>
            <Clock><span>Sun Feb 16</span><span>11:18{"\u2009"}AM</span></Clock>
          </StatusArea>
        </MenuBar>

        <Window>
          <BrowserChrome>
            <TabStrip>
              <TrafficLights>
                <Light $c="#ed6b60" />
                <Light $c="#f5be4f" />
                <Light $c="#62c655" />
              </TrafficLights>
              <Tab $w={482}>
                <DiscordFavicon />
                <TabTitle $w={338} $fade>(144) Discord | #general | NSB</TabTitle>
                <TabClose $ml={16}><MdClose size={28} /></TabClose>
              </Tab>
              <Tab $w={464} $active>
                <ViteFavicon />
                <TabTitle $w={340}>International Student Support</TabTitle>
                <TabClose $ml={14}><MdClose size={28} /></TabClose>
              </Tab>
              <NewTab><MdAdd size={34} /></NewTab>
              <TabSearch><MdKeyboardArrowDown size={34} /></TabSearch>
            </TabStrip>
            <ToolArea>
              <Toolbar>
                <NavButton $dim><MdArrowBack size={36} /></NavButton>
                <NavButton $dim><MdArrowForward size={36} /></NavButton>
                <NavButton><MdRefresh size={36} /></NavButton>
                <Omnibox>
                  <InfoBadge><MdInfoOutline size={32} /></InfoBadge>
                  <Url>localhost<em>:5173</em></Url>
                  <MdStarBorder size={36} />
                </Omnibox>
                <Extensions>
                  <StatusSlot $w={68}><StylusExtension /></StatusSlot>
                  <PuzzleIcon />
                  <ToolDivider $ml={34} $mr={32} />
                  <Avatar />
                  <MoreSlot><MdMoreVert size={36} /></MoreSlot>
                </Extensions>
              </Toolbar>
              <BookmarkBar>
                <AppsGrid />
                <ToolDivider $ml={29} $mr={28} />
                {bookmarks.map(([label, w, icon, gap]) => (
                  <Bookmark key={label} $w={w} $gap={gap}>{icon}{label}</Bookmark>
                ))}
                <ChevronsIcon />
                <ToolDivider $ml={32} $mr={32} />
                <Bookmark $w={220} $gap={16}><FolderIcon />All Bookmarks</Bookmark>
              </BookmarkBar>
            </ToolArea>
          </BrowserChrome>

          <SiteNav><Brand>Smart Settler</Brand></SiteNav>

          <Page>
            <ChatCard>
              <Messages>
                <Bubble $mine>Hi</Bubble>
                <Bubble>
                  Hello! It's great to connect with you! I'm happy to assist with any questions or concerns you may have as an international student. Are you looking for information on studying abroad, academic requirements, visa applications, or something else? Let me know and I'll do my best to provide helpful resources and guidance!
                </Bubble>
              </Messages>
              <Composer>
                <MessageInput placeholder="Type your message here..." />
                <SendButton type="button">Send</SendButton>
              </Composer>
            </ChatCard>
          </Page>
        </Window>

        <Dock>
          {dockApps.map((app) => (
            <DockItem key={app.name}>
              <Tile $bg={app.bg}>{app.art}</Tile>
              {app.running && <RunningDot />}
            </DockItem>
          ))}
          <DockDivider $mr={13} />
          <DockItem><PreviewLogo /></DockItem>
          <DockItem><Tile $bg="linear-gradient(200deg,#3f83e8 0%,#2560ee 30%,#2359ea 65%,#1b45bd 100%)"><ZoomLogo /></Tile></DockItem>
          <DockItem><Tile $bg="#fefefe"><OllamaLogo /></Tile></DockItem>
          <DockDivider $mr={15} />
          <DockItem><Trash /></DockItem>
        </Dock>
      </Desktop>
    </>
  );
}
